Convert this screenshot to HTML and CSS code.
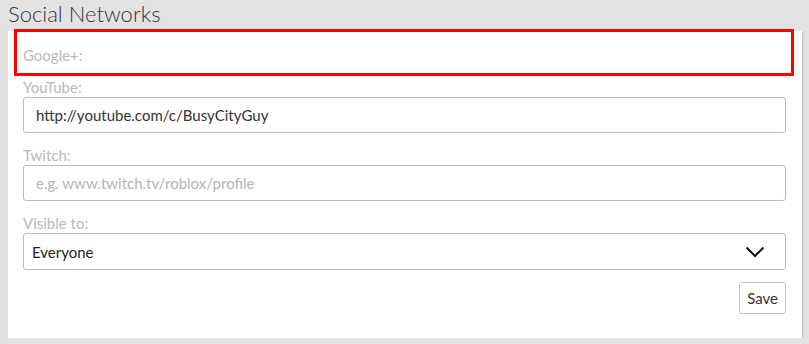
FILE: index.html
```html
<!DOCTYPE html>
<html lang="en">
<head>
    <meta charset="UTF-8">
    <title>Social Networks</title>
    <link rel="stylesheet" href="styles.css">
</head>
<body>
    <h2 class="section-title">Social Networks</h2>

    <div class="panel">
        <div class="form-group">
            <label class="field-label">Google+:</label>
        </div>
        <div class="form-group">
            <label class="field-label" for="youtube">YouTube:</label>
            <input class="field-input" type="text" id="youtube" value="http://youtube.com/c/BusyCityGuy">
        </div>
        <div class="form-group">
            <label class="field-label" for="twitch">Twitch:</label>
            <input class="field-input" type="text" id="twitch" placeholder="e.g. www.twitch.tv/roblox/profile">
        </div>
        <div class="form-group">
            <label class="field-label" for="visible">Visible to:</label>
            <div class="select-box" id="visible">
                <span>Everyone</span>
                <svg class="chevron" width="20" height="12" viewBox="0 0 20 12">
                    <polyline points="1.5,1.5 10,10 18.5,1.5" fill="none" stroke="#111" stroke-width="2"/>
                </svg>
            </div>
        </div>
        <div class="actions">
            <button class="save-btn">Save</button>
        </div>
    </div>

    <div class="highlight"></div>
</body>
</html>
```

FILE: styles.css
```css
body {
    margin: 0;
    padding: 0 7px 0 8px;
    background: #e3e3e3;
    font-family: Lato, "Open Sans", sans-serif;
    position: relative;
}

.section-title {
    margin: 0;
    height: 31px;
    font-size: 22px;
    font-weight: 300;
    line-height: 28px;
    color: #343434;
}

.panel {
    background: #fff;
    padding: 14px 16px 24px 15px;
    box-shadow: 1px 1px 2px rgba(0, 0, 0, 0.18);
}

.form-group { margin-bottom: 12px; }
.form-group:last-of-type { margin-bottom: 0; }

.field-label {
    display: block;
    height: 20px;
    font-size: 15px;
    line-height: 20px;
    color: #b9b9b9;
}

.field-input {
    display: block;
    width: 100%;
    height: 36px;
    box-sizing: border-box;
    padding: 0 12px;
    border: 1px solid #bdbdbd;
    border-radius: 3px;
    font-family: inherit;
    font-size: 15px;
    color: #333;
    outline: none;
}

.field-input::placeholder { color: #b5b5b5; }

.select-box {
    display: flex;
    align-items: center;
    justify-content: space-between;
    height: 37px;
    box-sizing: border-box;
    padding: 0 20px 0 8px;
    border: 1px solid #bdbdbd;
    border-radius: 3px;
    font-size: 15px;
    color: #222;
}

.actions {
    display: flex;
    justify-content: flex-end;
    margin-top: 10px;
}

.save-btn {
    height: 32px;
    padding: 0 7px;
    background: #fff;
    border: 1px solid #c4c4c4;
    border-radius: 3px;
    font-family: inherit;
    font-size: 15px;
    color: #333;
}

.highlight {
    position: absolute;
    left: 14px;
    top: 29px;
    width: 774px;
    height: 41px;
    border: 3px solid #ff0000;
}
```
